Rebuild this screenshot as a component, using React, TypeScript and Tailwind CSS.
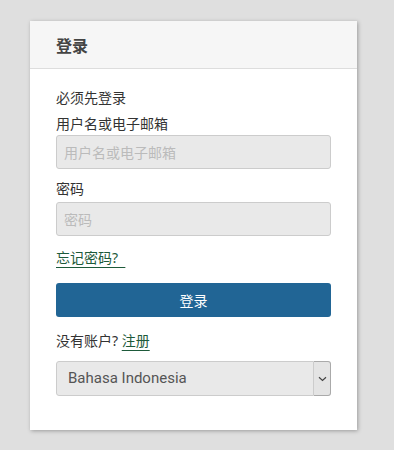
import React from "react";

const font = { fontFamily: '"Noto Sans", "Noto Sans CJK SC", sans-serif' };

export default function App() {
  return (
    <div className="min-h-[450px] w-[394px] bg-[#dfdfdf] pt-[21px] pl-[30px]" style={font}>
      <div className="w-[327px] bg-white shadow-[1px_1px_4px_rgba(0,0,0,0.3)]">
        <div className="h-[48px] border-b border-[#dddddd] bg-[#f6f6f6] pl-[26px] pt-[3px] flex items-center">
          <span className="text-[16px] font-bold text-[#444] leading-none">登录</span>
        </div>
        <div className="px-[26px] pt-[19px] pb-[34px] text-[14px] text-[#333]">
          <div className="leading-[20px]">必须先登录</div>
          <div className="mt-[6px] leading-[20px]">用户名或电子邮箱</div>
          <input
            className="mt-[1px] block h-[34px] w-[275px] rounded-[3px] border border-[#cccccc] bg-[#e9e9e9] px-[7px] text-[14px] placeholder:text-[#bbbbbb] outline-none"
            placeholder="用户名或电子邮箱"
            style={font}
          />
          <div className="mt-[10px] leading-[20px]">密码</div>
          <input
            type="password"
            className="mt-[3px] block h-[34px] w-[275px] rounded-[3px] border border-[#cccccc] bg-[#e9e9e9] px-[7px] text-[14px] placeholder:text-[#bbbbbb] outline-none"
            placeholder="密码"
            style={font}
          />
          <div className="mt-[12px] leading-[20px]">
            <a className="text-[#1d5a3a] underline underline-offset-[4px] decoration-[#1d5a3a]" href="#">
              忘记密码?&nbsp;&nbsp;
            </a>
          </div>
          <button
            className="mt-[15px] block h-[34px] w-[275px] rounded-[3px] bg-[#216595] text-white text-[14px]"
            style={font}
          >
            登录
          </button>
          <div className="mt-[14px] leading-[20px]">
            没有账户?&nbsp;
            <a className="text-[#1d5a3a] underline underline-offset-[4px] decoration-[#1d5a3a]" href="#">
              注册
            </a>
          </div>
          <div className="mt-[10px] flex h-[35px] w-[275px]">
            <div
              className="flex flex-1 items-center rounded-l-[3px] border border-[#cccccc] bg-[#e9e9e9] pl-[11px] text-[15px] text-[#555]"
              style={{ fontFamily: 'Roboto, "Noto Sans", sans-serif' }}
            >
              Bahasa Indonesia
            </div>
            <div className="flex w-[17px] items-center justify-center rounded-r-[3px] border border-l-0 border-[#aaaaaa] bg-[#e4e4e4]">
              <svg width="9" height="6" viewBox="0 0 9 6" fill="none">
                <path d="M1 1.2 L4.5 4.5 L8 1.2" stroke="#444" strokeWidth="1.2" />
              </svg>
            </div>
          </div>
        </div>
      </div>
    </div>
  );
}
